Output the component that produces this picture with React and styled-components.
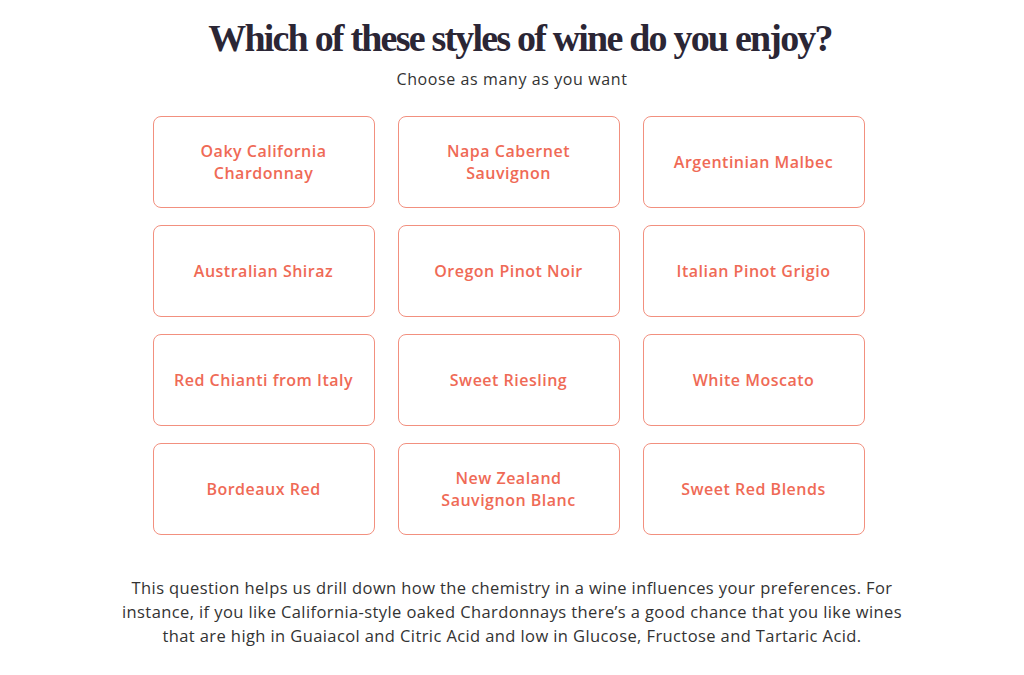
import styled, { createGlobalStyle } from "styled-components";

const GlobalStyle = createGlobalStyle`
  html, body {
    margin: 0;
    padding: 0;
    background: #ffffff;
  }
  body {
    font-family: "Open Sans", "Liberation Sans", sans-serif;
  }
`;

const Page = styled.main`
  display: flex;
  flex-direction: column;
  align-items: center;
  width: 1024px;
  height: 675px;
  padding-top: 16px;
  box-sizing: border-box;
`;

const Title = styled.h1`
  margin: 0 0 0 16px;
  font-family: "Liberation Serif", "DejaVu Serif", serif;
  font-weight: 700;
  font-size: 38px;
  line-height: 44px;
  letter-spacing: -1.8px;
  color: #2b2635;
`;

const Subtitle = styled.p`
  margin: 9px 0 0;
  font-size: 16px;
  line-height: 20px;
  letter-spacing: 0.6px;
  color: #333333;
`;

const Grid = styled.div`
  display: grid;
  grid-template-columns: repeat(3, 222px);
  grid-auto-rows: 92px;
  column-gap: 23px;
  row-gap: 17px;
  margin: 27px 7px 0 0;
`;

const Option = styled.button`
  display: flex;
  align-items: center;
  justify-content: center;
  padding: 0 10px;
  background: #ffffff;
  border: 1px solid #f2907f;
  border-radius: 8px;
  font-family: "Open Sans", "Liberation Sans", sans-serif;
  font-weight: 600;
  font-size: 16px;
  line-height: 22px;
  letter-spacing: 0.5px;
  color: #ef6a56;
  text-align: center;
  cursor: pointer;
`;

const Note = styled.p`
  margin: 41px 0 0;
  width: 800px;
  font-size: 16.5px;
  line-height: 24px;
  letter-spacing: 0.4px;
  color: #333333;
  text-align: center;
`;

const wines = [
  ["Oaky California", "Chardonnay"],
  ["Napa Cabernet", "Sauvignon"],
  ["Argentinian Malbec"],
  ["Australian Shiraz"],
  ["Oregon Pinot Noir"],
  ["Italian Pinot Grigio"],
  ["Red Chianti from Italy"],
  ["Sweet Riesling"],
  ["White Moscato"],
  ["Bordeaux Red"],
  ["New Zealand", "Sauvignon Blanc"],
  ["Sweet Red Blends"],
];

function App() {
  return (
    <>
      <GlobalStyle />
      <Page>
        <Title>Which of these styles of wine do you enjoy?</Title>
        <Subtitle>Choose as many as you want</Subtitle>
        <Grid>
          {wines.map((lines) => (
            <Option key={lines.join(" ")}>
              <span>
                {lines.map((line, i) => (
                  <span key={line}>
                    {i > 0 && <br />}
                    {line}
                  </span>
                ))}
              </span>
            </Option>
          ))}
        </Grid>
        <Note>
          This question helps us drill down how the chemistry in a wine
          influences your preferences. For instance, if you like
          California-style oaked Chardonnays there’s a good chance that you
          like wines that are high in Guaiacol and Citric Acid and low in
          Glucose, Fructose and Tartaric Acid.
        </Note>
      </Page>
    </>
  );
}

export default App;
